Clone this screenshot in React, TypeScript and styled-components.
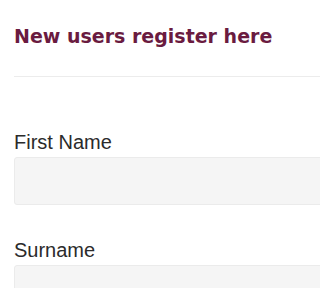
import React from "react";
import styled, { createGlobalStyle } from "styled-components";

const Global = createGlobalStyle`
  html, body { margin: 0; padding: 0; background: #ffffff; }
  body { overflow: hidden; }
`;

const Page = styled.div`
  width: 340px;
  padding: 0 0 0 14px;
  box-sizing: border-box;
`;

const Heading = styled.h2`
  margin: 0;
  padding-top: 23px;
  font-family: "DejaVu Sans", sans-serif;
  font-weight: 700;
  font-size: 19px;
  line-height: 26px;
  color: #6a1b40;
`;

const Divider = styled.hr`
  margin: 27px 0 0 0;
  border: 0;
  border-top: 1px solid #ececec;
  height: 0;
`;

const Form = styled.form`
  display: flex;
  flex-direction: column;
  padding-top: 54px;
  gap: 34px;
`;

const Field = styled.div`
  display: flex;
  flex-direction: column;
  gap: 4px;
`;

const Label = styled.label`
  font-family: "Liberation Sans", Arial, sans-serif;
  font-size: 20px;
  line-height: 22px;
  color: #2b2b2b;
`;

const Input = styled.input`
  height: 48px;
  box-sizing: border-box;
  background: #f5f5f5;
  border: 1px solid #ebebeb;
  border-radius: 3px;
  width: 100%;
`;

export default function App() {
  return (
    <>
      <Global />
      <Page>
        <Heading>New users register here</Heading>
        <Divider />
        <Form>
          <Field>
            <Label>First Name</Label>
            <Input type="text" />
          </Field>
          <Field>
            <Label>Surname</Label>
            <Input type="text" />
          </Field>
        </Form>
      </Page>
    </>
  );
}
